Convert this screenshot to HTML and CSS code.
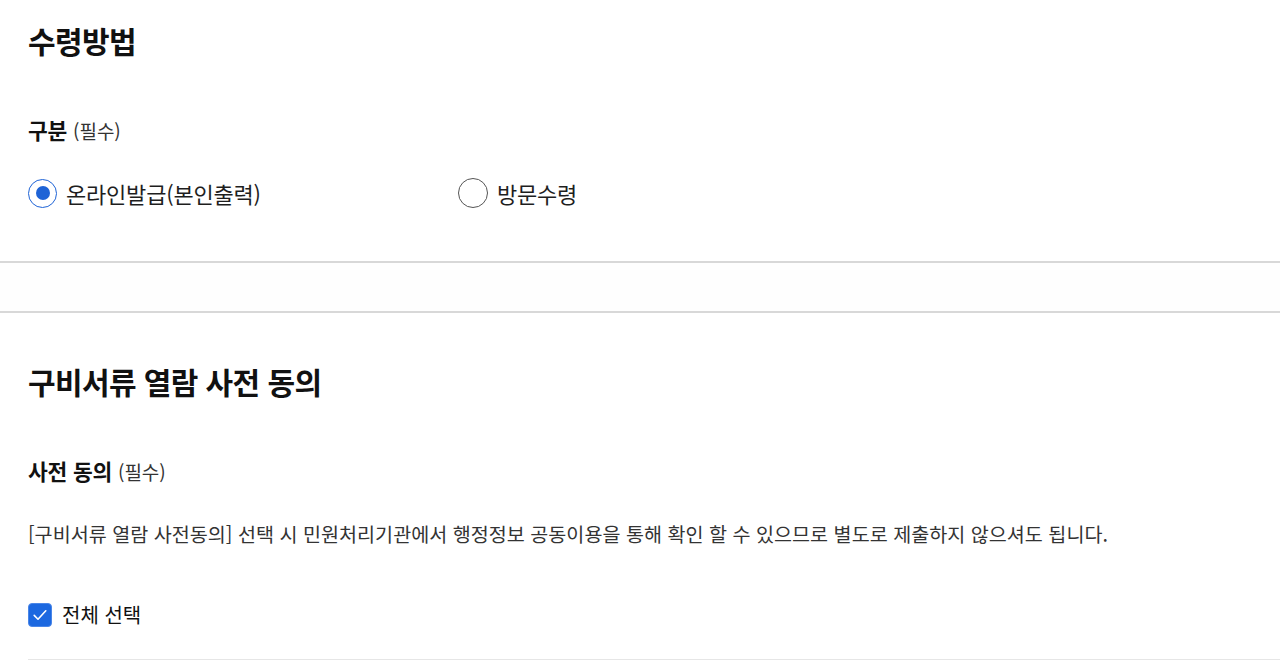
FILE: index.html
```html
<!DOCTYPE html>
<html lang="ko">
<head>
    <meta charset="UTF-8">
    <meta name="viewport" content="width=device-width, initial-scale=1.0">
    <title>수령방법</title>
    <link rel="stylesheet" href="styles.css">
</head>
<body>
    <section class="block receive">
        <h2 class="title">수령방법</h2>
        <div class="field-label">구분 <span class="req">(필수)</span></div>
        <div class="radios">
            <label class="radio checked"><span class="dot"></span>온라인발급(본인출력)</label>
            <label class="radio"><span class="dot"></span>방문수령</label>
        </div>
    </section>

    <div class="divider"></div>

    <section class="block consent">
        <h2 class="title">구비서류 열람 사전 동의</h2>
        <div class="field-label">사전 동의 <span class="req">(필수)</span></div>
        <p class="desc">[구비서류 열람 사전동의] 선택 시 민원처리기관에서 행정정보 공동이용을 통해 확인 할 수 있으므로 별도로 제출하지 않으셔도 됩니다.</p>
        <label class="check">
            <span class="box">
                <svg width="20" height="20" viewBox="0 0 20 20"><path d="M4.2 10.4l3.8 3.8 7.8-8.4" fill="none" stroke="#fff" stroke-width="1.6" stroke-linecap="round" stroke-linejoin="round"/></svg>
            </span>
            전체 선택
        </label>
        <div class="rule"></div>
    </section>
</body>
</html>
```

FILE: styles.css
```css
body {
    margin: 0;
    background: #ffffff;
    color: #1e1e1e;
    font-family: "Noto Sans CJK KR", "Noto Sans", sans-serif;
}
.block {
    padding: 20px 0 0 28px;
}
.title {
    margin: 0;
    font-size: 30px;
    line-height: 40px;
    font-weight: 700;
    color: #111111;
    letter-spacing: -0.6px;
}
.field-label {
    margin-top: 50px;
    font-size: 21.5px;
    line-height: 40px;
    font-weight: 700;
    color: #111111;
    letter-spacing: -0.2px;
}
.req {
    font-size: 19px;
    font-weight: 400;
    color: #333333;
    letter-spacing: 0;
}
.receive {
    padding-bottom: 53px;
}
.radios {
    display: flex;
    margin-top: 27px;
}
.radio {
    display: flex;
    align-items: center;
    gap: 9px;
    width: 430px;
    font-size: 22px;
    line-height: 30px;
    color: #1e1e1e;
    letter-spacing: -0.2px;
}
.dot {
    width: 28px;
    height: 28px;
    border: 1px solid #555555;
    border-radius: 50%;
    display: flex;
    align-items: center;
    justify-content: center;
}
.radio.checked .dot {
    border: 1.5px solid #1e63d6;
    width: 27px;
    height: 27px;
}
.radio.checked .dot::after {
    content: "";
    width: 14px;
    height: 14px;
    border-radius: 50%;
    background: #1e63d6;
}
.divider {
    height: 48px;
    border-top: 2px solid #d8d8d8;
    border-bottom: 2px solid #d8d8d8;
    background: #fefefe;
}
.consent {
    padding-top: 48px;
}
.desc {
    margin: 27px 0 0;
    font-size: 19.6px;
    line-height: 30px;
    color: #333333;
}
.check {
    display: flex;
    align-items: center;
    gap: 10px;
    margin-top: 51px;
    font-size: 20px;
    line-height: 30px;
    color: #111111;
}
.box {
    width: 22px;
    height: 22px;
    border: 1px solid #4a86e8;
    border-radius: 4px;
    background: #1c68e0;
    display: flex;
    align-items: center;
    justify-content: center;
}
.rule {
    margin-top: 29px;
    border-top: 1px solid #e6e6e6;
}
```
